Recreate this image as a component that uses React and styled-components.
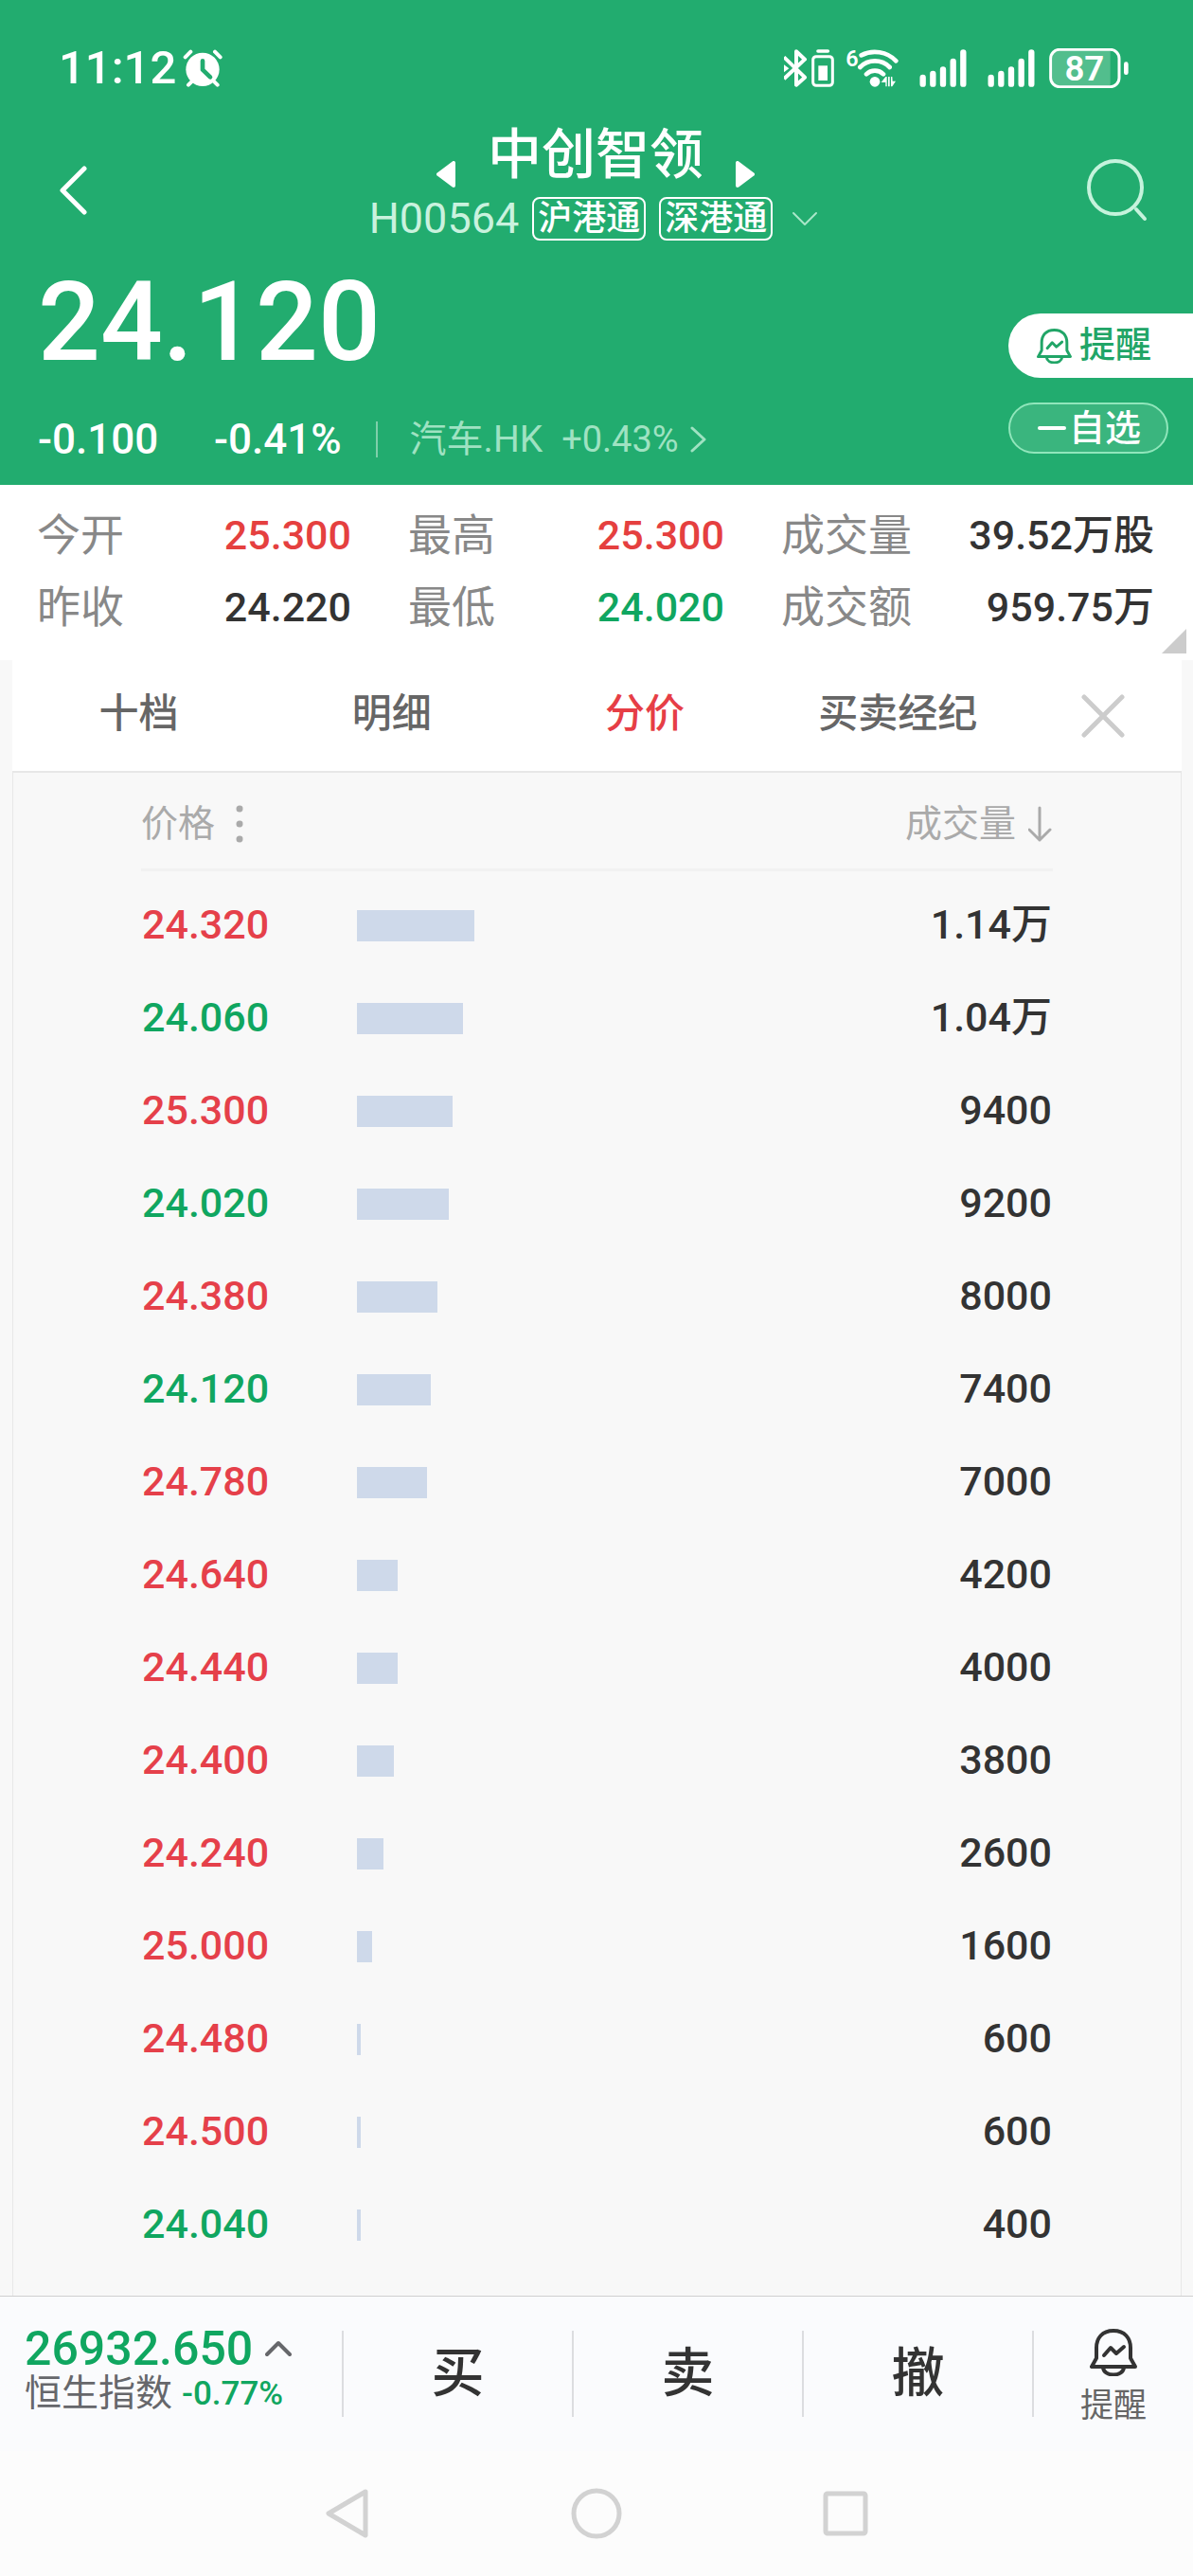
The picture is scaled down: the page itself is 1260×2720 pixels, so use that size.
import React, { useState } from "react";
import styled, { createGlobalStyle } from "styled-components";

const GlobalStyle = createGlobalStyle`
  * {
    box-sizing: border-box;
  }

  body {
    margin: 0;
    background-color: #f8f8f8;
    color: #333333;
    font-family: "Roboto", "Noto Sans CJK SC", sans-serif;
    line-height: 1.2;
  }

  button {
    padding: 0;
    border: 0;
    background: none;
    color: inherit;
    font: inherit;
    cursor: pointer;
  }

  a {
    color: inherit;
    text-decoration: none;
  }

  svg {
    display: block;
    flex: none;
  }
`;

const Page = styled.div`
  display: flex;
  flex-direction: column;
  min-height: 100vh;
`;

const Header = styled.header`
  background-color: #22ac6f;
  color: #ffffff;
`;

const StatusBar = styled.div`
  display: flex;
  align-items: center;
  justify-content: space-between;
  height: 128px;
  padding: 16px 68px 0 62px;
`;

const StatusGroup = styled.div`
  display: flex;
  align-items: center;
  gap: ${({ $gap }) => $gap}px;
`;

const Clock = styled.span`
  font-size: 49px;
  font-weight: 500;
  line-height: 56px;
`;

const TitleBar = styled.div`
  display: flex;
  align-items: flex-end;
  justify-content: space-between;
  padding: 0 40px 0 38px;
`;

const IconButton = styled.button`
  display: flex;
  align-items: center;
  justify-content: center;
  width: 80px;
  height: 106px;
`;

const TitleBlock = styled.div`
  display: flex;
  flex-direction: column;
  align-items: center;
  gap: 8px;
`;

const TitleRow = styled.div`
  display: flex;
  align-items: flex-end;
  gap: 34px;
`;

const StepButton = styled.button`
  padding-bottom: 2px;
`;

const StockName = styled.h1`
  margin: 0;
  font-size: 57px;
  font-weight: 500;
  line-height: 72px;
`;

const CodeRow = styled.div`
  display: flex;
  align-items: center;
  gap: 14px;
`;

const StockCode = styled.span`
  color: #c9f2de;
  font-size: 45px;
  line-height: 46px;
`;

const MarketTag = styled.span`
  height: 46px;
  padding: 0 4px;
  border: 2px solid #ffffff;
  border-radius: 8px;
  font-size: 36px;
  font-weight: 500;
  line-height: 42px;
`;

const ExpandButton = styled.button`
  padding-left: 6px;
`;

const Quote = styled.section`
  display: flex;
  align-items: flex-end;
  justify-content: space-between;
  padding: 26px 0 26px 40px;
`;

const LastPrice = styled.div`
  font-size: 116px;
  font-weight: 500;
  line-height: 120px;
`;

const ChangeRow = styled.div`
  display: flex;
  align-items: center;
  margin-top: 42px;
  font-size: 44px;
  font-weight: 500;
  line-height: 44px;
`;

const ChangeAmount = styled.span`
  width: 186px;
`;

const Sector = styled.a`
  display: flex;
  align-items: center;
  gap: 12px;
  margin-left: 36px;
  padding-left: 34px;
  border-left: 2px solid #7fcfaa;
  color: #9fe2c2;
  font-size: 38px;
  font-weight: 400;
  line-height: 38px;
`;

const SectorName = styled.span`
  margin-right: 8px;
  font-size: 39px;
`;

const QuoteActions = styled.div`
  display: flex;
  flex-direction: column;
  gap: 26px;
  width: 195px;
  margin-bottom: 7px;
`;

const RemindPill = styled.button`
  display: flex;
  align-items: center;
  gap: 8px;
  height: 68px;
  padding-left: 30px;
  border-radius: 34px 0 0 34px;
  background-color: #ffffff;
  color: #21a567;
  font-size: 38px;
  font-weight: 500;
`;

const WatchPill = styled.button`
  display: flex;
  align-items: center;
  gap: 2px;
  height: 54px;
  margin-right: 26px;
  padding-left: 28px;
  border: 2px solid #90e6bb;
  border-radius: 27px;
  background-color: #3ab57e;
  font-size: 38px;
  font-weight: 500;
  line-height: 46px;
`;

const Stats = styled.dl`
  position: relative;
  display: grid;
  grid-template-columns: 332fr 334fr 394fr;
  column-gap: 60px;
  margin: 0;
  padding: 16px 41px 17px 39px;
  background-color: #ffffff;
`;

const Stat = styled.div`
  display: flex;
  align-items: center;
  justify-content: space-between;
  height: 76px;
`;

const StatLabel = styled.dt`
  color: #888888;
  font-size: 46px;
`;

const StatValue = styled.dd`
  margin: 0;
  color: ${({ $color }) => $color || "#333333"};
  font-size: 43px;
  font-weight: 500;
`;

const Corner = styled.svg`
  position: absolute;
  right: 7px;
  bottom: 7px;
`;

const Panel = styled.main`
  flex: 1;
  margin: 0 12px 0 13px;
`;

const Tabs = styled.div`
  display: flex;
  height: 119px;
  border-bottom: 2px solid #e7e7e7;
  background-color: #ffffff;
`;

const Tab = styled.button`
  flex: 267;
  padding-bottom: 2px;
  color: ${({ $active }) => ($active ? "#e63e46" : "#666666")};
  font-size: 42px;
  font-weight: 500;
`;

const CloseButton = styled.button`
  display: flex;
  flex: 166;
  align-items: center;
  justify-content: center;
`;

const Sheet = styled.div`
  padding: 0 135px 26px;
  border: solid #e7e7e7;
  border-width: 0 1px;
`;

const PriceTable = styled.table`
  width: 100%;
  border-spacing: 0;
  table-layout: fixed;

  tbody::before {
    content: "";
    display: block;
    height: 8px;
  }
`;

const HeadCell = styled.th`
  width: ${({ $width }) => $width || "auto"};
  height: 104px;
  padding: 8px 0 0;
  border-bottom: 3px solid #f1f1f1;
  color: #aaaaaa;
  font-size: 39px;
  font-weight: 400;
`;

const SortButton = styled.button`
  display: flex;
  align-items: center;
  gap: ${({ $gap }) => $gap}px;
  margin-left: ${({ $end }) => ($end ? "auto" : 0)};
`;

const Cell = styled.td`
  height: 98px;
  padding: 0 1px;
  color: ${({ $color }) => $color || "#333333"};
  font-size: 43px;
  font-weight: 500;
  text-align: ${({ $align }) => $align || "left"};
`;

const BarCell = styled.td`
  padding: 0;
`;

const VolumeBar = styled.div`
  height: 33px;
  background-color: #ced9ea;
`;

const BottomBar = styled.footer`
  display: grid;
  grid-template-columns: 361fr 243fr 243fr 243fr 170fr;
  align-items: center;
  height: 164px;
  border-top: 1px solid #cfcfcf;
  background-color: #fafbfd;
`;

const IndexLink = styled.a`
  padding: 0 0 6px 26px;
  color: #10a660;
`;

const IndexLine = styled.div`
  display: flex;
  align-items: center;
  gap: ${({ $gap }) => $gap}px;
  height: 48px;
  font-size: ${({ $size }) => $size}px;
  font-weight: 500;
`;

const IndexName = styled.span`
  color: #66676b;
  font-size: 39px;
  font-weight: 400;
`;

const TradeButton = styled.button`
  height: 91px;
  border-left: 2px solid #dcdde0;
  font-size: 56px;
  font-weight: 500;
`;

const AlertButton = styled.button`
  display: flex;
  flex-direction: column;
  align-items: center;
  justify-content: center;
  gap: 10px;
  height: 91px;
  padding-top: 8px;
  border-left: 2px solid #dcdde0;
`;

const AlertLabel = styled.span`
  color: #666666;
  font-size: 35px;
  line-height: 44px;
`;

const SystemNav = styled.nav`
  display: flex;
  height: 132px;
  padding: 0 235px;
  background-color: #fcfcfc;
`;

const NavButton = styled.button`
  display: flex;
  flex: 1;
  align-items: center;
  justify-content: center;
`;

const RED = "#e5403f";
const GREEN = "#10a660";

const stats = [
  { label: "今开", value: "25.300", color: RED },
  { label: "最高", value: "25.300", color: RED },
  { label: "成交量", value: "39.52万股" },
  { label: "昨收", value: "24.220" },
  { label: "最低", value: "24.020", color: GREEN },
  { label: "成交额", value: "959.75万" },
];

const tabs = ["十档", "明细", "分价", "买卖经纪"];

const rows = [
  { price: "24.320", volume: "1.14万", bar: 124, up: true },
  { price: "24.060", volume: "1.04万", bar: 112 },
  { price: "25.300", volume: "9400", bar: 101, up: true },
  { price: "24.020", volume: "9200", bar: 97 },
  { price: "24.380", volume: "8000", bar: 85, up: true },
  { price: "24.120", volume: "7400", bar: 78 },
  { price: "24.780", volume: "7000", bar: 74, up: true },
  { price: "24.640", volume: "4200", bar: 43, up: true },
  { price: "24.440", volume: "4000", bar: 43, up: true },
  { price: "24.400", volume: "3800", bar: 39, up: true },
  { price: "24.240", volume: "2600", bar: 28, up: true },
  { price: "25.000", volume: "1600", bar: 16, up: true },
  { price: "24.480", volume: "600", bar: 4, up: true },
  { price: "24.500", volume: "600", bar: 4, up: true },
  { price: "24.040", volume: "400", bar: 4 },
];

const AlarmIcon = () => (
  <svg width="42" height="40" viewBox="586 66 126 120" fill="none">
    <circle cx="649" cy="130" r="53" fill="#fff" />
    <path
      d="M594 91L611 74M688 74L705 91M604 179L620 163M696 179L680 163"
      stroke="#fff"
      strokeWidth="12"
      strokeLinecap="round"
    />
    <path
      d="M649 103V131L673 154"
      stroke="#22ac6f"
      strokeWidth="14"
      strokeLinecap="round"
      strokeLinejoin="round"
    />
  </svg>
);

const BluetoothIcon = () => (
  <svg width="53" height="42" viewBox="87 63 159 126" fill="none" stroke="#fff">
    <path
      d="M87 91L153 155L126 179V73L153 98L87 160"
      strokeWidth="12"
      strokeLinejoin="round"
    />
    <path d="M87 115L103 127L87 139Z" fill="#fff" stroke="none" />
    <rect x="179" y="89" width="62" height="92" rx="10" strokeWidth="9" />
    <rect x="196" y="118" width="29" height="47" fill="#fff" stroke="none" />
    <path d="M195 72H226" strokeWidth="11" strokeLinecap="round" />
  </svg>
);

const WifiIcon = () => (
  <svg width="59" height="50" viewBox="273 51 177 150" fill="none" stroke="#fff">
    <text
      x="283"
      y="119"
      fill="#fff"
      stroke="none"
      fontSize="70"
      fontWeight="600"
    >
      6
    </text>
    <path
      d="M332 85A94 94 0 0 1 442 103M328 123A66 66 0 0 1 422 123M348 145A38 38 0 0 1 402 145"
      strokeWidth="14"
      strokeLinecap="round"
    />
    <circle cx="375" cy="169" r="16" fill="#fff" stroke="none" />
    <path
      d="M395 171L409 153H413V184H409V171ZM417 153H422V184H417ZM426 153H430L431 167H441L430 184H426Z"
      fill="#fff"
      stroke="none"
    />
  </svg>
);

const SignalIcon = () => (
  <svg width="50" height="42" viewBox="512 63 150 126">
    <path
      d="M523 156V176M555 144V176M587 130V176M619 105V176M651 76V176"
      stroke="#fff"
      strokeWidth="19"
      strokeLinecap="round"
    />
  </svg>
);

const BatteryIcon = () => (
  <svg width="84" height="42" viewBox="926 63 252 126" fill="none">
    <path d="M956 70H1120V184H956Q936 184 936 160V94Q936 70 956 70Z" fill="#52be8d" />
    <rect x="931" y="67" width="217" height="118" rx="28" stroke="#fff" strokeWidth="9" />
    <path d="M1170 113V140" stroke="#fff" strokeWidth="14" strokeLinecap="round" />
    <text
      x="1038"
      y="166"
      fill="#fff"
      fontSize="110"
      fontWeight="600"
      textAnchor="middle"
    >
      87
    </text>
  </svg>
);

const BellIcon = ({ size }) => (
  <svg
    width={size}
    height={size}
    viewBox="0 0 50 50"
    fill="none"
    stroke="currentColor"
    strokeWidth="4"
    strokeLinejoin="round"
  >
    <path d="M25 2C13 2 7 10 7 20V31L2 40H48L43 31V20C43 10 37 2 25 2Z" />
    <path d="M14 41C15 51 35 51 36 41" />
    <path d="M15 28L22 20L28 26L36 19" strokeLinecap="round" />
  </svg>
);

const Stroke = ({ width, height, d, color = "currentColor", weight = 3 }) => (
  <svg width={width} height={height} viewBox={`0 0 ${width} ${height}`} fill="none">
    <path
      d={d}
      stroke={color}
      strokeWidth={weight}
      strokeLinecap="round"
      strokeLinejoin="round"
    />
  </svg>
);

const TriangleIcon = ({ d }) => (
  <svg width="20" height="28" viewBox="0 0 20 28">
    <path d={d} fill="#fff" stroke="#fff" strokeWidth="4" strokeLinejoin="round" />
  </svg>
);

const App = () => {
  const [active, setActive] = useState("分价");

  return (
    <Page>
      <GlobalStyle />
      <Header>
        <StatusBar>
          <StatusGroup $gap={7}>
            <Clock>11:12</Clock>
            <AlarmIcon />
          </StatusGroup>
          <StatusGroup $gap={22}>
            <StatusGroup $gap={9}>
              <BluetoothIcon />
              <WifiIcon />
            </StatusGroup>
            <SignalIcon />
            <StatusGroup $gap={15}>
              <SignalIcon />
              <BatteryIcon />
            </StatusGroup>
          </StatusGroup>
        </StatusBar>

        <TitleBar>
          <IconButton aria-label="返回">
            <Stroke width={32} height={52} d="M27 3L4 26L27 49" weight={5} />
          </IconButton>
          <TitleBlock>
            <TitleRow>
              <StepButton aria-label="上一只">
                <TriangleIcon d="M18 2V26L2 14Z" />
              </StepButton>
              <StockName>中创智领</StockName>
              <StepButton aria-label="下一只">
                <TriangleIcon d="M2 2V26L18 14Z" />
              </StepButton>
            </TitleRow>
            <CodeRow>
              <StockCode>H00564</StockCode>
              <MarketTag>沪港通</MarketTag>
              <MarketTag>深港通</MarketTag>
              <ExpandButton aria-label="展开">
                <Stroke
                  width={32}
                  height={16}
                  d="M2 2L14 14L26 2"
                  color="#a9e6c8"
                  weight={2}
                />
              </ExpandButton>
            </CodeRow>
          </TitleBlock>
          <IconButton aria-label="搜索">
            <svg width="64" height="66" viewBox="0 0 64 66" fill="none">
              <g stroke="#c5f3dc" strokeWidth="4" strokeLinecap="round">
                <circle cx="30" cy="30" r="28" />
                <path d="M52 53L61 63" />
              </g>
            </svg>
          </IconButton>
        </TitleBar>

        <Quote>
          <div>
            <LastPrice>24.120</LastPrice>
            <ChangeRow>
              <ChangeAmount>-0.100</ChangeAmount>
              <span>-0.41%</span>
              <Sector href="#sector">
                <SectorName>汽车.HK</SectorName>
                <span>+0.43%</span>
                <Stroke width={18} height={28} d="M2 2L15 14L2 26" />
              </Sector>
            </ChangeRow>
          </div>
          <QuoteActions>
            <RemindPill>
              <BellIcon size={37} />
              提醒
            </RemindPill>
            <WatchPill>
              <Stroke width={32} height={6} d="M3 3H29" weight={4} />
              自选
            </WatchPill>
          </QuoteActions>
        </Quote>
      </Header>

      <Stats>
        {stats.map(({ label, value, color }) => (
          <Stat key={label}>
            <StatLabel>{label}</StatLabel>
            <StatValue $color={color}>{value}</StatValue>
          </Stat>
        ))}
        <Corner width="26" height="26" viewBox="0 0 26 26">
          <path d="M26 0V26H0Z" fill="#cccccc" />
        </Corner>
      </Stats>

      <Panel>
        <Tabs>
          {tabs.map((tab) => (
            <Tab key={tab} $active={tab === active} onClick={() => setActive(tab)}>
              {tab}
            </Tab>
          ))}
          <CloseButton aria-label="关闭">
            <Stroke
              width={46}
              height={46}
              d="M3 3L43 43M43 3L3 43"
              color="#cccccc"
              weight={5}
            />
          </CloseButton>
        </Tabs>

        <Sheet>
          <PriceTable>
            <thead>
              <tr>
                <HeadCell $width="228px">
                  <SortButton $gap={22}>
                    价格
                    <svg width="8" height="40" viewBox="0 0 8 40" fill="#aaaaaa">
                      <circle cx="4" cy="4" r="3.5" />
                      <circle cx="4" cy="20" r="3.5" />
                      <circle cx="4" cy="36" r="3.5" />
                    </svg>
                  </SortButton>
                </HeadCell>
                <HeadCell aria-label="占比" />
                <HeadCell>
                  <SortButton $gap={13} $end>
                    成交量
                    <Stroke
                      width={26}
                      height={38}
                      d="M12 2V36M1 25L12 36L23 25"
                      color="#aaaaaa"
                    />
                  </SortButton>
                </HeadCell>
              </tr>
            </thead>
            <tbody>
              {rows.map(({ price, volume, bar, up }) => (
                <tr key={price}>
                  <Cell $color={up ? "#e5404a" : GREEN}>{price}</Cell>
                  <BarCell>
                    <VolumeBar style={{ width: bar }} />
                  </BarCell>
                  <Cell $align="right">{volume}</Cell>
                </tr>
              ))}
            </tbody>
          </PriceTable>
        </Sheet>
      </Panel>

      <BottomBar>
        <IndexLink href="#index">
          <IndexLine $size={50} $gap={13}>
            26932.650
            <Stroke width={28} height={18} d="M2 15L14 3L26 15" color="#66676b" weight={4} />
          </IndexLine>
          <IndexLine $size={35} $gap={10}>
            <IndexName>恒生指数</IndexName>
            -0.77%
          </IndexLine>
        </IndexLink>
        <TradeButton>买</TradeButton>
        <TradeButton>卖</TradeButton>
        <TradeButton>撤</TradeButton>
        <AlertButton>
          <BellIcon size={50} />
          <AlertLabel>提醒</AlertLabel>
        </AlertButton>
      </BottomBar>

      <SystemNav>
        <NavButton aria-label="后退">
          <Stroke
            width={48}
            height={54}
            d="M43 4L4 27L43 50Z"
            color="#d2d2d2"
            weight={5}
          />
        </NavButton>
        <NavButton aria-label="主页">
          <svg width="54" height="54" viewBox="0 0 54 54" fill="none">
            <circle cx="27" cy="27" r="24" stroke="#d2d2d2" strokeWidth="5" />
          </svg>
        </NavButton>
        <NavButton aria-label="最近任务">
          <svg width="48" height="48" viewBox="0 0 48 48" fill="none">
            <rect
              x="3"
              y="3"
              width="42"
              height="42"
              rx="2"
              stroke="#d2d2d2"
              strokeWidth="5"
            />
          </svg>
        </NavButton>
      </SystemNav>
    </Page>
  );
};

export default App;
